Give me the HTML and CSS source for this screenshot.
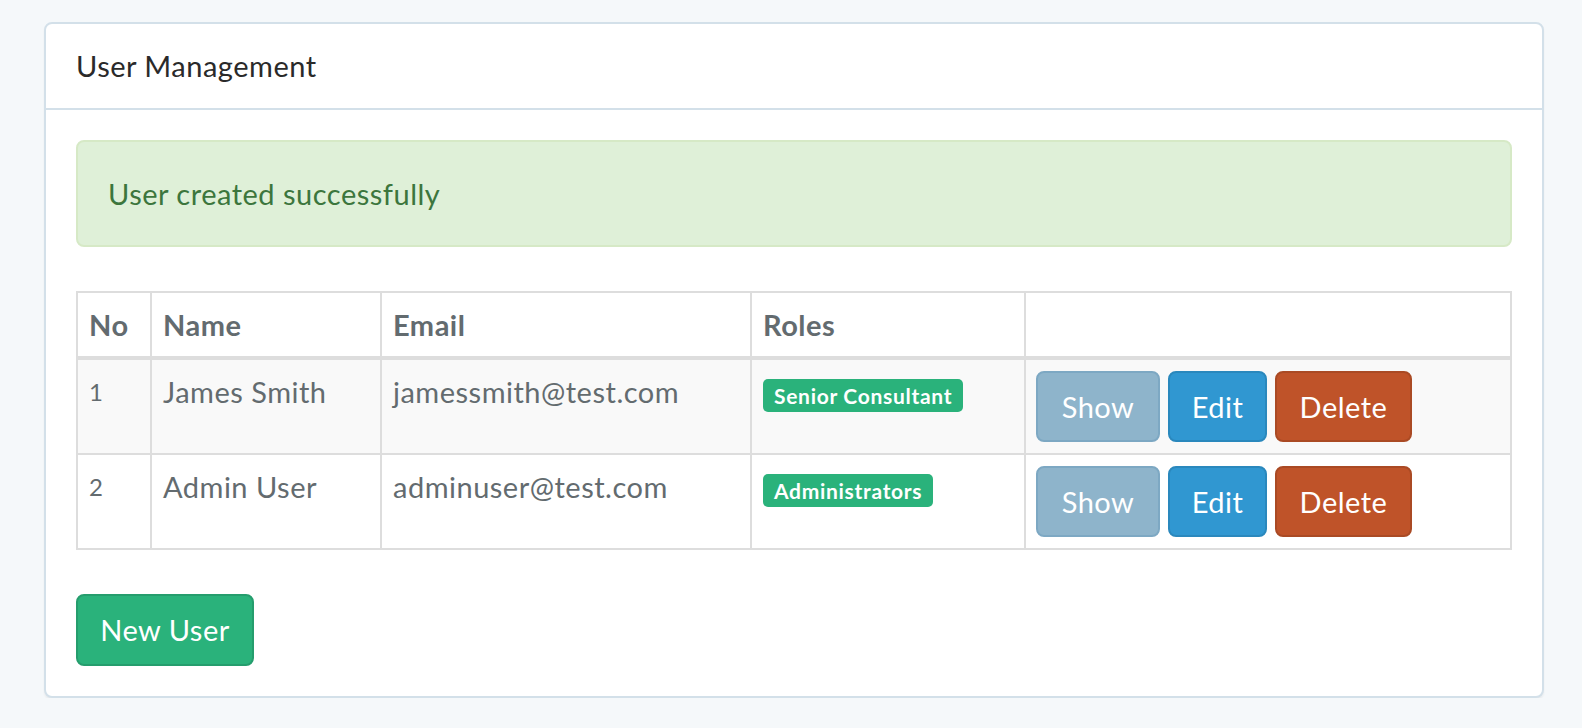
FILE: index.html
```html
<!DOCTYPE html>
<html lang="en">
<head>
<meta charset="utf-8">
<title>User Management</title>
<link rel="stylesheet" href="styles.css">
</head>
<body>
<div class="panel">
  <div class="panel-heading">User Management</div>
  <div class="panel-body">
    <div class="alert">User created successfully</div>
    <table class="users">
      <thead>
        <tr>
          <th class="c-no">No</th>
          <th class="c-name">Name</th>
          <th class="c-email">Email</th>
          <th class="c-roles">Roles</th>
          <th class="c-actions"></th>
        </tr>
      </thead>
      <tbody>
        <tr class="striped">
          <td class="num">1</td>
          <td>James Smith</td>
          <td>jamessmith@test.com</td>
          <td><span class="label">Senior Consultant</span></td>
          <td class="act-cell">
            <div class="actions">
              <a class="btn btn-show" href="#">Show</a>
              <a class="btn btn-edit" href="#">Edit</a>
              <a class="btn btn-delete" href="#">Delete</a>
            </div>
          </td>
        </tr>
        <tr>
          <td class="num">2</td>
          <td>Admin User</td>
          <td>adminuser@test.com</td>
          <td><span class="label">Administrators</span></td>
          <td class="act-cell">
            <div class="actions">
              <a class="btn btn-show" href="#">Show</a>
              <a class="btn btn-edit" href="#">Edit</a>
              <a class="btn btn-delete" href="#">Delete</a>
            </div>
          </td>
        </tr>
      </tbody>
    </table>
    <a class="btn btn-new" href="#">New User</a>
  </div>
</div>
</body>
</html>
```
FILE: styles.css
```css
html, body {
  margin: 0;
  padding: 0;
}
body {
  background: #f5f8fa;
  font-family: "Lato", "Open Sans", sans-serif;
  color: #636b6f;
  padding: 22px 38px 0 44px;
  letter-spacing: 0.5px;
}
.panel {
  background: #fff;
  border: 2px solid #d3e0e9;
  border-radius: 8px;
  box-shadow: 0 2px 2px rgba(0,0,0,0.05);
}
.panel-heading {
  padding: 20px 30px;
  font-size: 29px;
  line-height: 44px;
  color: #2a2a2a;
  border-bottom: 2px solid #d3e0e9;
}
.panel-body {
  padding: 30px;
}
.alert {
  background: #dff0d8;
  border: 2px solid #d6e9c6;
  border-radius: 8px;
  color: #3c763d;
  font-size: 29px;
  line-height: 43px;
  padding: 30px 30px;
  margin-bottom: 44px;
}
.users {
  width: 100%;
  border-collapse: collapse;
  border: 2px solid #ddd;
  margin-bottom: 44px;
}
.users th, .users td {
  border: 2px solid #ddd;
  padding: 11px 11px;
  text-align: left;
  vertical-align: top;
  font-size: 29px;
  line-height: 42px;
}
.users th {
  font-weight: 700;
  border-bottom-width: 4px;
  padding-top: 11px;
  padding-bottom: 10px;
}
.c-no { width: 50px; }
.c-name { width: 206px; }
.c-email { width: 346px; }
.c-roles { width: 250px; }
.users td.num {
  font-size: 24px;
}
.users td.act-cell {
  padding-left: 10px;
}
.striped td {
  background: #f9f9f9;
}
.label {
  display: inline-block;
  background: #2ab27b;
  color: #fff;
  font-size: 21px;
  font-weight: 700;
  letter-spacing: 0.7px;
  line-height: 33px;
  padding: 0 11px;
  border-radius: 5px;
  margin-top: 8px;
  vertical-align: top;
}
.actions {
  display: flex;
  gap: 8px;
}
.btn {
  display: inline-block;
  box-sizing: border-box;
  height: 71px;
  line-height: 67px;
  padding: 0;
  border: 2px solid transparent;
  border-radius: 8px;
  color: #fff;
  font-size: 29px;
  text-align: center;
  text-decoration: none;
}
.btn-show {
  background: #8eb4cb;
  border-color: #7da8c3;
  width: 124px;
}
.btn-edit {
  background: #3097d1;
  border-color: #2a88bd;
  width: 99px;
}
.btn-delete {
  background: #bf5329;
  border-color: #aa4a24;
  width: 137px;
}
.btn-new {
  background: #2ab27b;
  border-color: #259d6d;
  width: 178px;
  height: 72px;
  line-height: 68px;
}
```
